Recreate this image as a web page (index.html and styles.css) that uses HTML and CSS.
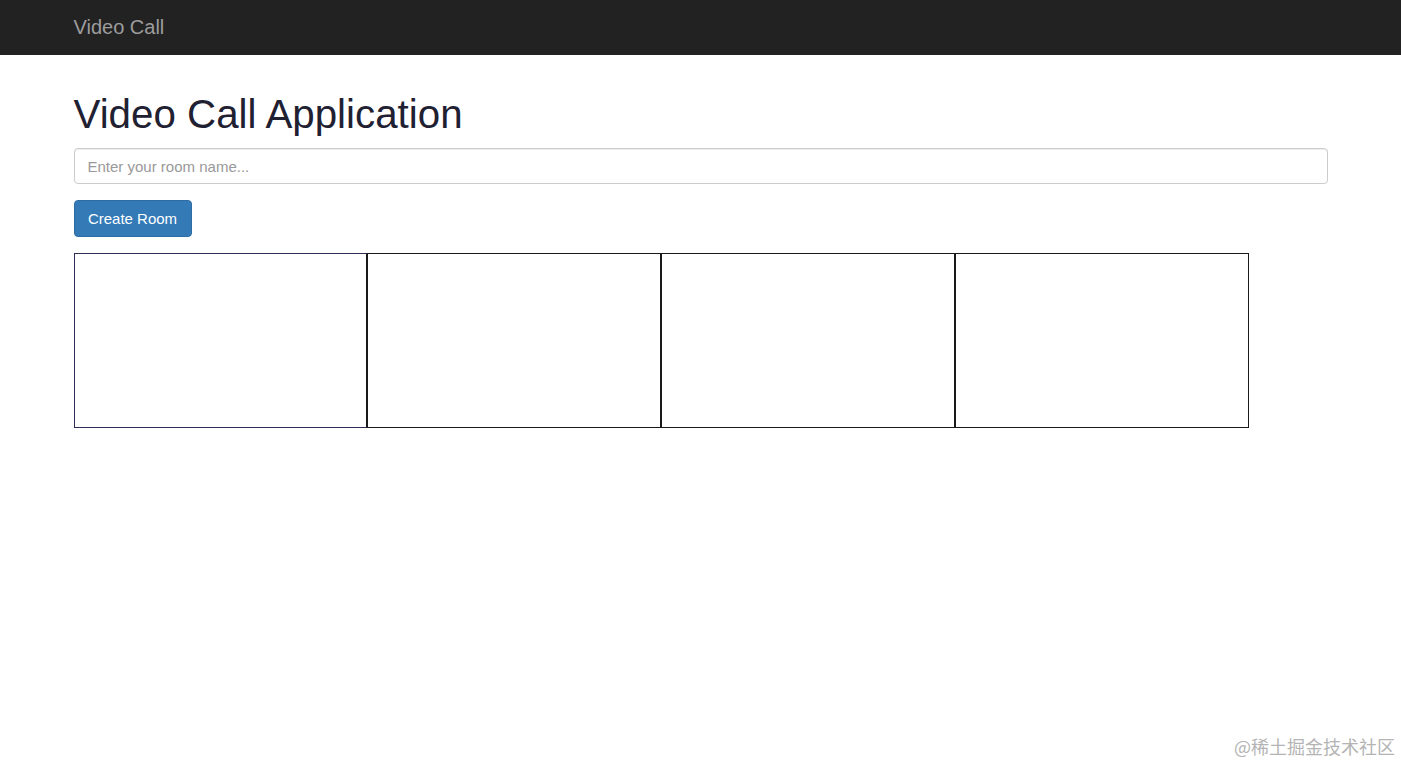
FILE: index.html
```html
<!DOCTYPE html>
<html lang="en">
<head>
<meta charset="utf-8">
<title>Video Call</title>
<link rel="stylesheet" href="styles.css">
</head>
<body>
<nav class="navbar">
  <div class="container">
    <a class="brand" href="#">Video Call</a>
  </div>
</nav>
<main class="container">
  <h1 class="title">Video Call Application</h1>
  <input class="room-input" type="text" placeholder="Enter your room name...">
  <button class="btn-primary" type="button">Create Room</button>
  <div class="videos">
    <div class="video video-local"></div>
    <div class="video"></div>
    <div class="video"></div>
    <div class="video"></div>
  </div>
</main>
<div class="watermark">@稀土掘金技术社区</div>
</body>
</html>
```

FILE: styles.css
```css
html, body {
  margin: 0;
  padding: 0;
  background: #fff;
  font-family: "Liberation Sans", Arial, sans-serif;
  color: #333;
  height: 100%;
}
body {
  position: relative;
  overflow: hidden;
}
.container {
  width: 1254px;
  margin: 0 auto;
  padding: 0 16px;
  box-sizing: content-box;
}
.navbar {
  background: #222;
  height: 55px;
}
.navbar .container {
  display: flex;
  align-items: center;
  height: 55px;
}
.brand {
  color: #9d9d9d;
  font-size: 20px;
  text-decoration: none;
  line-height: 1;
  padding-bottom: 2px;
}
.title {
  font-family: "Liberation Sans", Arial, sans-serif;
  font-weight: 500;
  font-size: 40.3px;
  line-height: 1.1;
  color: #1f2132;
  margin: 38px 0 11px;
}
.room-input {
  display: block;
  width: 100%;
  box-sizing: border-box;
  height: 36px;
  padding: 0 13px;
  font-family: "Liberation Sans", Arial, sans-serif;
  font-size: 15px;
  border: 1px solid #ccc;
  border-radius: 4px;
  box-shadow: inset 0 1px 1px rgba(0,0,0,.075);
  color: #555;
  margin: 0;
}
.room-input::placeholder {
  color: #999;
}
.btn-primary {
  display: block;
  margin-top: 16px;
  height: 37px;
  width: 118px;
  padding: 0;
  background: #337ab7;
  border: 1px solid #2e6da4;
  border-radius: 4px;
  color: #fff;
  font-family: "Liberation Sans", Arial, sans-serif;
  font-size: 15px;
}
.videos {
  display: flex;
  margin-top: 16px;
}
.video {
  width: 293.75px;
  height: 175px;
  box-sizing: border-box;
  border: 1px solid #1a1a1a;
}
.video-local {
  border-color: #2f2f55;
  border-right-color: #1a1a1a;
}
.watermark {
  position: absolute;
  right: 6px;
  bottom: 6px;
  font-family: "Noto Sans CJK SC", "Liberation Sans", sans-serif;
  font-size: 18px;
  color: #b4b4b4;
  line-height: 1;
}
```
